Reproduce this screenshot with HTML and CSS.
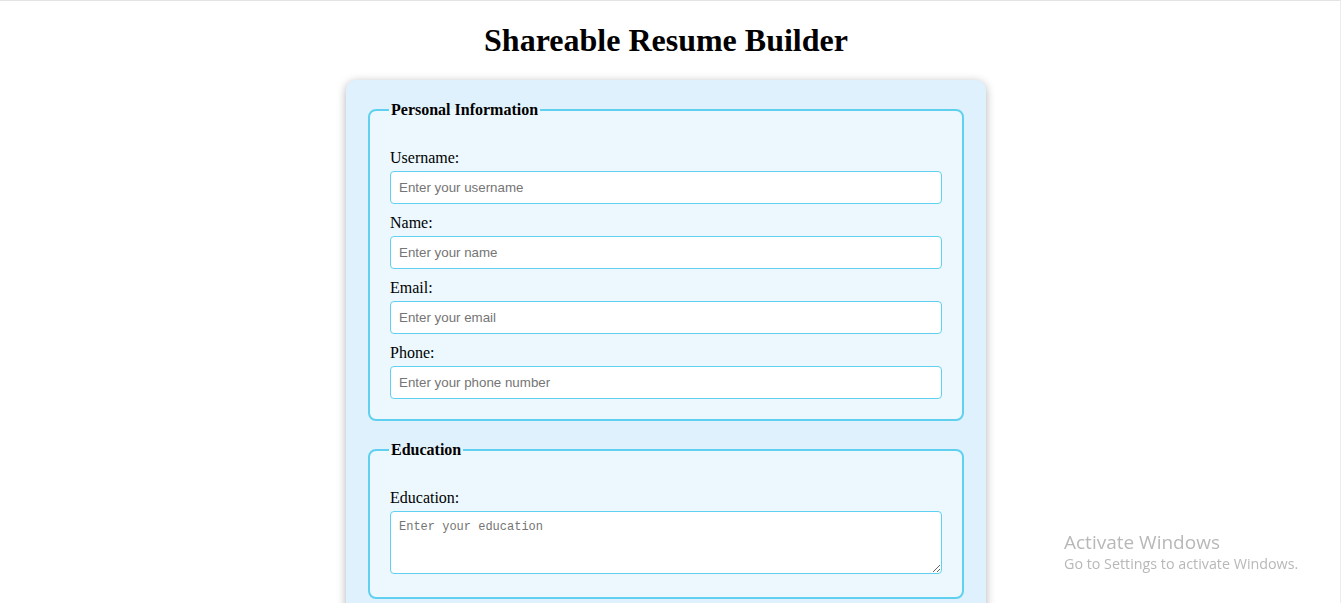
FILE: index.html
```html
<!DOCTYPE html>
<html lang="en">
<head>
<meta charset="utf-8">
<title>Shareable Resume Builder</title>
<link rel="stylesheet" href="styles.css">
</head>
<body>
<div class="page">
  <h1 class="title">Shareable Resume Builder</h1>
  <form class="card">
    <fieldset class="group">
      <legend class="legend">Personal Information</legend>
      <label class="label" for="username">Username:</label>
      <input class="field" id="username" type="text" placeholder="Enter your username">
      <label class="label" for="name">Name:</label>
      <input class="field" id="name" type="text" placeholder="Enter your name">
      <label class="label" for="email">Email:</label>
      <input class="field" id="email" type="email" placeholder="Enter your email">
      <label class="label" for="phone">Phone:</label>
      <input class="field" id="phone" type="tel" placeholder="Enter your phone number">
    </fieldset>
    <fieldset class="group">
      <legend class="legend">Education</legend>
      <label class="label" for="education">Education:</label>
      <textarea class="area" id="education" placeholder="Enter your education"></textarea>
    </fieldset>
  </form>
</div>
<div class="watermark">
  <div class="wm-title">Activate Windows</div>
  <div class="wm-sub">Go to Settings to activate Windows.</div>
</div>
</body>
</html>
```

FILE: styles.css
```css
html, body {
  margin: 0;
  padding: 0;
  background: #ffffff;
  font-family: "Liberation Serif", "Times New Roman", serif;
  color: #000;
}

.page {
  min-height: 603px;
  box-sizing: border-box;
  padding-right: 8px;
  border-top: 1px solid #e3e3e3;
  border-right: 1px solid #ececec;
  overflow: hidden;
}

.title {
  text-align: center;
  font-size: 32px;
  font-weight: bold;
  margin: 21px 0 21px;
  line-height: 37px;
}

.card {
  width: 640px;
  box-sizing: border-box;
  margin: 0 auto;
  padding: 20px 20px 20px;
  background: #dff1fd;
  border-radius: 10px;
  box-shadow: 0 2px 10px rgba(0, 0, 0, 0.3);
}

.group {
  margin: 0 2px 19px;
  padding: 0 20px 20px;
  border: 2px solid #5fd0ef;
  border-radius: 8px;
  background: #ecf8fe;
}

.legend {
  font-weight: bold;
  font-size: 16px;
  padding: 0 2px;
  line-height: 19px;
  margin-left: -1px;
}

.label {
  display: block;
  font-size: 16px;
  line-height: 18px;
  margin: 10px 0 4px;
}

.group .legend + .label {
  margin-top: 30px;
}

.field {
  display: block;
  width: 100%;
  box-sizing: border-box;
  height: 33px;
  padding: 8px;
  border: 1px solid #5fd0ef;
  border-radius: 4px;
  background: #fff;
  font-family: "Liberation Sans", Arial, sans-serif;
  font-size: 13.33px;
  margin: 0;
}

.field::placeholder {
  color: #757575;
}

.area {
  display: block;
  width: 100%;
  box-sizing: border-box;
  height: 63px;
  padding: 8px;
  border: 1px solid #5fd0ef;
  border-radius: 4px;
  background: #fff;
  font-family: "Liberation Mono", "DejaVu Sans Mono", monospace;
  font-size: 12px;
  margin: 0 0 3px;
  resize: vertical;
}

.area::placeholder {
  color: #757575;
}

.watermark {
  position: fixed;
  left: 1064px;
  top: 530px;
  color: #b8b8b8;
  font-family: "Open Sans", "Noto Sans", sans-serif;
  pointer-events: none;
}

.wm-title {
  font-size: 19px;
  line-height: 24px;
}

.wm-sub {
  font-size: 14.3px;
  line-height: 19px;
}
```
